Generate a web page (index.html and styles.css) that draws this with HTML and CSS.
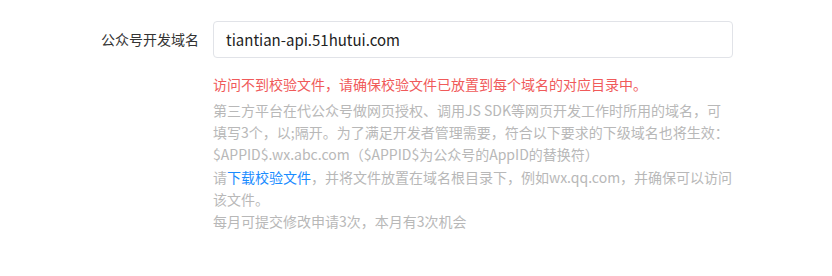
FILE: index.html
```html
<!DOCTYPE html>
<html lang="zh-CN">

<head>
  <meta charset="UTF-8">
  <meta name="viewport" content="width=device-width, initial-scale=1.0">
  <title>公众号开发域名</title>
  <link rel="stylesheet" href="styles.css">
</head>

<body>
  <div class="form-item">
    <label class="form-label">公众号开发域名</label>
    <div class="form-content">
      <div class="input-box">tiantian-api.51hutui.com</div>
      <p class="error">访问不到校验文件，请确保校验文件已放置到每个域名的对应目录中。</p>
      <div class="tips">
        <p>第三方平台在代公众号做网页授权、调用JS SDK等网页开发工作时所用的域名，可填写3个，以;隔开。为了满足开发者管理需要，符合以下要求的下级域名也将生效：$APPID$.wx.abc.com（$APPID$为公众号的AppID的替换符）</p>
        <p>请<a href="#">下载校验文件</a>，并将文件放置在域名根目录下，例如wx.qq.com，并确保可以访问该文件。</p>
        <p>每月可提交修改申请3次，本月有3次机会</p>
      </div>
    </div>
  </div>
</body>

</html>
```

FILE: styles.css
```css
* {
  margin: 0;
  padding: 0;
}

body {
  background: #ffffff;
  font-family: "Noto Sans CJK SC", "Noto Sans", sans-serif;
  font-size: 14px;
  color: #333333;
}

.form-item {
  display: flex;
  padding: 21px 0 0 0;
}

.form-label {
  width: 199px;
  padding-right: 14px;
  text-align: right;
  line-height: 37px;
  color: #333333;
}

.form-content {
  width: 520px;
}

.input-box {
  height: 35px;
  line-height: 35px;
  padding: 0 12px;
  border: 1px solid #e1e3e8;
  border-radius: 4px;
  font-size: 15px;
  color: #222222;
}

.error {
  margin-top: 15px;
  line-height: 22px;
  color: #f05a5a;
}

.tips {
  margin-top: 4px;
  line-height: 22.2px;
  color: #b8b8b8;
}

.tips a {
  color: #1a8cff;
  text-decoration: none;
}
```
